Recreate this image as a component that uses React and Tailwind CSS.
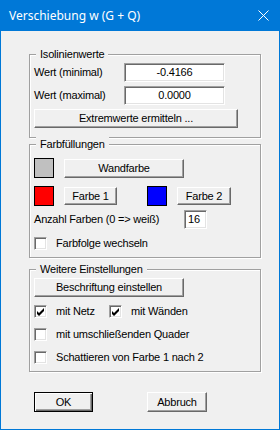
import React from "react";

const raised =
  "bg-[#f0f0f0] border border-t-white border-l-white border-r-[#696969] border-b-[#696969] shadow-[inset_-1px_-1px_0_#a0a0a0]";
const sunken =
  "bg-white border border-t-[#a0a0a0] border-l-[#a0a0a0] border-r-white border-b-white shadow-[inset_1px_1px_0_#696969,inset_-1px_-1px_0_#e3e3e3]";

function Button({ className = "", children }) {
  return (
    <button type="button" className={`flex items-center justify-center ${raised} ${className}`}>
      {children}
    </button>
  );
}

function Group({ title, className = "", children }) {
  return (
    <div
      className={`relative ml-[28px] w-[232px] border border-[#a0a0a0] shadow-[1px_1px_0_white,inset_1px_1px_0_white] px-[4px] ${className}`}
    >
      <span className="absolute left-[6px] top-[-8px] bg-[#f0f0f0] px-[4px] leading-[14px]">{title}</span>
      {children}
    </div>
  );
}

function Check({ checked, label, className = "" }) {
  return (
    <div className={`flex items-center h-[13px] ${className}`}>
      <div className={`w-[13px] h-[13px] shrink-0 ${sunken}`}>
        {checked && (
          <svg width="13" height="13" viewBox="0 0 13 13" className="-ml-px -mt-px">
            <path d="M3 6 L5 8 L10 3 L10 6 L5 11 L3 9 Z" fill="black" />
          </svg>
        )}
      </div>
      <span className="ml-[9px] whitespace-nowrap">{label}</span>
    </div>
  );
}

function Swatch({ color }) {
  return <div className={`w-[20px] h-[20px] border border-black shrink-0 ${color}`} />;
}

export default function App() {
  return (
    <div className="w-[280px] h-[430px] flex flex-col font-['Liberation_Sans',Arial,sans-serif] text-[11px] tracking-[-0.2px] text-black">
      <div className="h-[31px] bg-[#0078d7] flex items-center justify-between pl-[9px] pr-[11px] shrink-0">
        <span className="text-white text-[12px] tracking-normal font-['Noto_Sans',sans-serif]">
          Verschiebung w (G + Q)
        </span>
        <svg width="11" height="11" viewBox="0 0 11 11">
          <path d="M0.5 0.5 L10.5 10.5 M10.5 0.5 L0.5 10.5" stroke="white" strokeWidth="1" />
        </svg>
      </div>
      <div className="flex-1 bg-[#f0f0f0] border-x border-b border-[#0078d7] flex flex-col">
        <Group title="Isolinienwerte" className="mt-[23px] pt-[8px] pb-[9px]">
          <div className="flex items-center h-[19px]">
            <span className="w-[90px]">Wert (minimal)</span>
            <div className={`w-[101px] h-[19px] flex items-center justify-center ${sunken}`}>-0.4166</div>
          </div>
          <div className="flex items-center h-[19px] mt-[4px]">
            <span className="w-[90px]">Wert (maximal)</span>
            <div className={`w-[101px] h-[19px] flex items-center justify-center ${sunken}`}>0.0000</div>
          </div>
          <Button className="w-[204px] h-[19px] mt-[4px]">Extremwerte ermitteln ...</Button>
        </Group>

        <Group title="Farbfüllungen" className="mt-[6px] pt-[13px] pb-[7px]">
          <div className="flex items-center h-[20px]">
            <Swatch color="bg-[#c0c0c0]" />
            <Button className="ml-[10px] w-[120px] h-[19px]">Wandfarbe</Button>
          </div>
          <div className="flex items-center h-[20px] mt-[8px]">
            <Swatch color="bg-[#ff0000]" />
            <Button className="ml-[10px] w-[53px] h-[18px]">Farbe 1</Button>
            <div className="ml-[30px]">
              <Swatch color="bg-[#0000ff]" />
            </div>
            <Button className="ml-[10px] w-[54px] h-[18px]">Farbe 2</Button>
          </div>
          <div className="flex items-center h-[19px] mt-[4px]">
            <span className="w-[150px]">Anzahl Farben (0 =&gt; weiß)</span>
            <div className={`w-[23px] h-[19px] flex items-center pl-[3px] ${sunken}`}>16</div>
          </div>
          <Check label="Farbfolge wechseln" className="mt-[8px]" />
        </Group>

        <Group title="Weitere Einstellungen" className="mt-[11px] pt-[8px] pb-[7px]">
          <Button className="w-[150px] h-[19px]">Beschriftung einstellen</Button>
          <div className="flex mt-[8px]">
            <Check checked label="mit Netz" className="w-[75px]" />
            <Check checked label="mit Wänden" />
          </div>
          <Check label="mit umschließenden Quader" className="mt-[10px]" />
          <Check label="Schattieren von Farbe 1 nach 2" className="mt-[10px]" />
        </Group>

        <div className="flex mt-[20px] ml-[33px]">
          <button
            type="button"
            className="w-[59px] h-[20px] flex items-center justify-center bg-[#f0f0f0] border border-black shadow-[inset_1px_1px_0_white,inset_-1px_-1px_0_#696969,inset_-2px_-2px_0_#a0a0a0]"
          >
            OK
          </button>
          <Button className="ml-[54px] w-[60px] h-[20px]">Abbruch</Button>
        </div>
      </div>
    </div>
  );
}
